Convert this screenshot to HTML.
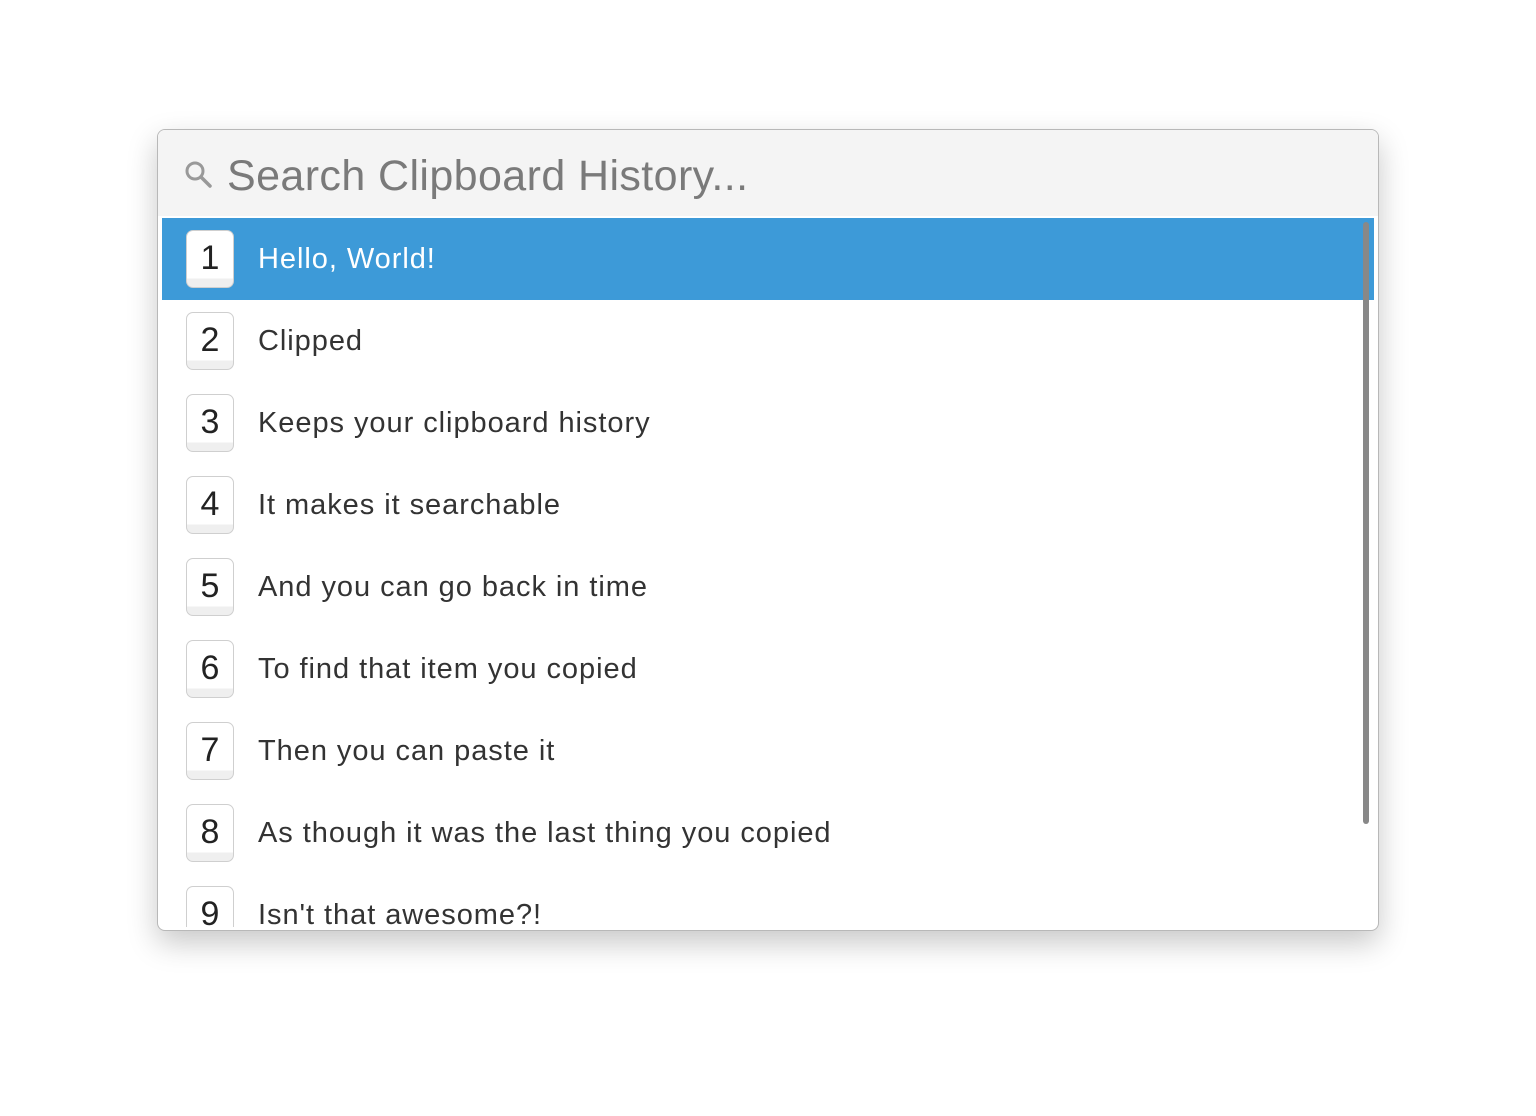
<!DOCTYPE html>
<html><head><style>
body{margin:0;width:1536px;height:1116px;background:#fff;font-family:"Liberation Sans",sans-serif;position:relative;overflow:hidden}
.win{position:absolute;left:157px;top:129px;width:1220px;height:800px;border:1px solid #b8b8b8;border-radius:8px;background:#fff;box-shadow:0 12px 30px rgba(0,0,0,.22);overflow:hidden}
.search{position:absolute;left:0;top:0;right:0;height:86px;background:#f4f4f4;}
.search span{position:absolute;left:69px;top:22px;font-size:43px;color:#7a7a7a;letter-spacing:0.4px}
.list{position:absolute;left:4px;top:88px;width:1212px;height:709px;overflow:hidden}
.row{height:82px;position:relative;color:#333}
.row.sel{background:#3d9ad8;color:#fff}
.key{position:absolute;left:24px;top:12px;width:46px;height:56px;border:1px solid #cfcfcf;border-radius:7px;background:linear-gradient(#fff 0,#fff 85%,#efefef 85%);color:#222;font-size:34px;text-align:center;line-height:54px}
.txt{position:absolute;left:96px;top:25px;font-size:29px;letter-spacing:0.95px}
.sb{position:absolute;left:1205px;top:92px;width:6px;height:602px;background:#888;border-radius:3px}
</style></head><body>
<div class="win">
<div class="search">
<svg style="position:absolute;left:26px;top:30px" width="30" height="30" viewBox="0 0 30 30"><circle cx="11" cy="11" r="8" fill="none" stroke="#999" stroke-width="3"/><line x1="17" y1="17" x2="26" y2="26" stroke="#999" stroke-width="3.5" stroke-linecap="round"/></svg>
<span>Search Clipboard History...</span></div>
<div class="list">
<div class="row sel"><div class="key">1</div><div class="txt">Hello, World!</div></div>
<div class="row"><div class="key">2</div><div class="txt">Clipped</div></div>
<div class="row"><div class="key">3</div><div class="txt">Keeps your clipboard history</div></div>
<div class="row"><div class="key">4</div><div class="txt">It makes it searchable</div></div>
<div class="row"><div class="key">5</div><div class="txt">And you can go back in time</div></div>
<div class="row"><div class="key">6</div><div class="txt">To find that item you copied</div></div>
<div class="row"><div class="key">7</div><div class="txt">Then you can paste it</div></div>
<div class="row"><div class="key">8</div><div class="txt">As though it was the last thing you copied</div></div>
<div class="row"><div class="key">9</div><div class="txt">Isn't that awesome?!</div></div>
</div>
<div class="sb"></div>
</div>
</body></html>
